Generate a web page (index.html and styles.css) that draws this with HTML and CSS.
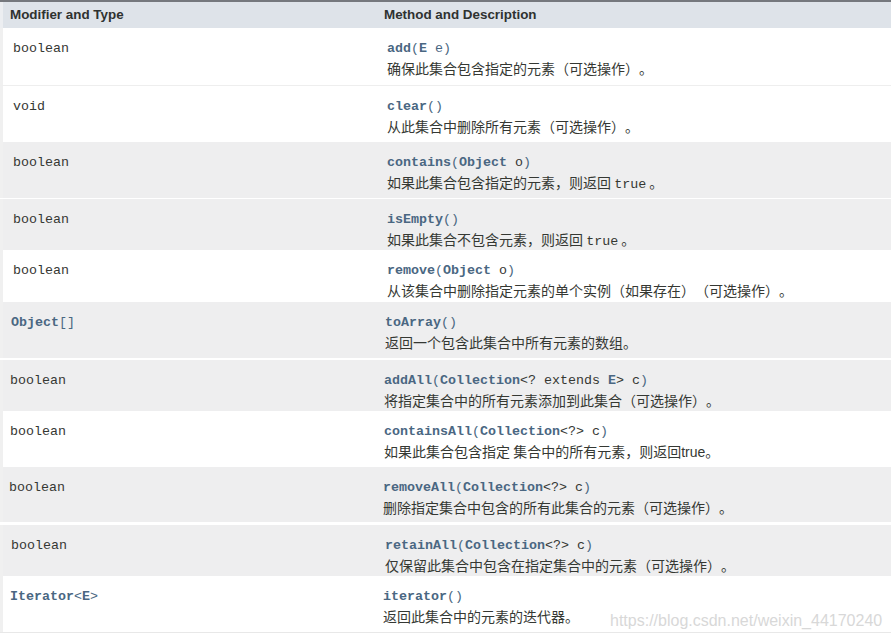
FILE: index.html
```html
<!DOCTYPE html>
<html>
<head>
<meta charset="utf-8">
<link rel="stylesheet" href="styles.css">
</head>
<body>
<div class="table">
  <div class="row head">
    <div class="cell">Modifier and Type</div>
    <div class="cell">Method and Description</div>
  </div>

  <div class="row white h58 bordered">
    <div class="cell"><code class="type">boolean</code></div>
    <div class="cell"><div class="sig"><b>add</b>(<b>E</b> e)</div><div class="desc">确保此集合包含指定的元素（可选操作）。</div></div>
  </div>

  <div class="row white h56">
    <div class="cell"><code class="type">void</code></div>
    <div class="cell"><div class="sig"><b>clear</b>()</div><div class="desc">从此集合中删除所有元素（可选操作）。</div></div>
  </div>

  <div class="row grey h56">
    <div class="cell"><code class="type">boolean</code></div>
    <div class="cell"><div class="sig"><b>contains</b>(<b>Object</b> <span class="dk">o</span>)</div><div class="desc">如果此集合包含指定的元素，则返回 <code class="inl">true</code> 。</div></div>
  </div>

  <div class="row grey h51 gap1">
    <div class="cell"><code class="type">boolean</code></div>
    <div class="cell"><div class="sig"><b>isEmpty</b>()</div><div class="desc">如果此集合不包含元素，则返回 <code class="inl">true</code> 。</div></div>
  </div>

  <div class="row white h52">
    <div class="cell"><code class="type">boolean</code></div>
    <div class="cell"><div class="sig"><b>remove</b>(<b>Object</b> <span class="dk">o</span>)</div><div class="desc">从该集合中删除指定元素的单个实例（如果存在）（可选操作）。</div></div>
  </div>

  <div class="row grey h56 off2">
    <div class="cell"><code class="type link"><b>Object</b>[]</code></div>
    <div class="cell"><div class="sig"><b>toArray</b>()</div><div class="desc">返回一个包含此集合中所有元素的数组。</div></div>
  </div>

  <div class="row grey h51 gap2 off3">
    <div class="cell"><code class="type">boolean</code></div>
    <div class="cell"><div class="sig"><b>addAll</b>(<b>Collection</b><span class="dk">&lt;? extends </span><b>E</b><span class="dk">&gt; c</span>)</div><div class="desc">将指定集合中的所有元素添加到此集合（可选操作）。</div></div>
  </div>

  <div class="row white h56 off3">
    <div class="cell"><code class="type">boolean</code></div>
    <div class="cell"><div class="sig"><b>containsAll</b>(<b>Collection</b><span class="dk">&lt;?&gt; c</span>)</div><div class="desc">如果此集合包含指定 集合中的所有元素，则返回<span class="lat">true</span>。</div></div>
  </div>

  <div class="row grey h55 off4">
    <div class="cell"><code class="type">boolean</code></div>
    <div class="cell"><div class="sig"><b>removeAll</b>(<b>Collection</b><span class="dk">&lt;?&gt; c</span>)</div><div class="desc">删除指定集合中包含的所有此集合的元素（可选操作）。</div></div>
  </div>

  <div class="row grey h51 gap3 off2">
    <div class="cell"><code class="type">boolean</code></div>
    <div class="cell"><div class="sig"><b>retainAll</b>(<b>Collection</b><span class="dk">&lt;?&gt; c</span>)</div><div class="desc">仅保留此集合中包含在指定集合中的元素（可选操作）。</div></div>
  </div>

  <div class="row white h56 off5">
    <div class="cell"><code class="type link"><b>Iterator</b>&lt;<b>E</b>&gt;</code></div>
    <div class="cell"><div class="sig"><b>iterator</b>()</div><div class="desc">返回此集合中的元素的迭代器。</div></div>
  </div>

  <div class="tail"></div>

  <div class="watermark">https://blog.csdn.net/weixin_44170240</div>
</div>
</body>
</html>
```

FILE: styles.css
```css
html, body {
  margin: 0;
  padding: 0;
  background: #ffffff;
}

body {
  width: 891px;
  height: 637px;
  overflow: hidden;
  font-family: "Liberation Sans", Arial, "Noto Sans CJK SC", sans-serif;
  color: #353833;
}

.table {
  position: relative;
  width: 891px;
  border-top: 2px solid #75787d;
  box-sizing: border-box;
}

.row {
  display: grid;
  grid-template-columns: 371px 1fr;
  padding-left: 13px;
  box-sizing: border-box;
  border-left: 3px solid #f0f0f0;
}

.row .cell:first-child {
  margin-left: -3px;
}

.head {
  height: 26px;
  background: #dee3e9;
  padding-left: 10px;
  align-items: center;
  font-size: 13.4px;
  font-weight: bold;
  color: #2f3230;
  line-height: 26px;
  border-left-color: #eceef1;
}

.white { background: #ffffff; }
.grey { background: #eeeeef; }

.h51 { height: 51px; }
.h52 { height: 52px; }
.h55 { height: 55px; }
.h56 { height: 56px; }
.h58 { height: 58px; }

.bordered { border-bottom: 1px solid #eeeeee; }

.gap1 { margin-top: 1px; }
.gap2 { margin-top: 2px; }
.gap3 { margin-top: 3px; }

.off2 { padding-left: 11px; }
.off3 { padding-left: 10px; }
.off4 { padding-left: 9px; }
.off5 { padding-left: 10px; }
.off5 .cell:last-child { margin-left: -1px; }

.cell {
  padding-top: 12px;
  min-width: 0;
}

.head .cell {
  padding-top: 0;
}

.type {
  font-family: "Liberation Mono", "Courier New", monospace;
  font-size: 13.33px;
  line-height: 18px;
  color: #353833;
  display: block;
}

.type.link {
  color: #4a6782;
}

.type b {
  font-weight: bold;
}

.sig {
  font-family: "Liberation Mono", "Courier New", monospace;
  font-size: 13.33px;
  line-height: 18px;
  color: #4a6782;
  white-space: nowrap;
}

.sig b {
  font-weight: bold;
}

.sig .dk {
  color: #353833;
}

.desc {
  font-family: "Noto Sans CJK SC", "Liberation Sans", sans-serif;
  font-size: 14px;
  line-height: 20px;
  color: #353833;
  white-space: nowrap;
  text-spacing-trim: space-all;
}

.inl {
  font-family: "Liberation Mono", "Courier New", monospace;
  font-size: 13.33px;
}

.lat {
  font-family: "Liberation Sans", Arial, sans-serif;
  font-size: 14px;
}

.tail {
  height: 5px;
  border-top: 1px solid #e8e8e8;
  background: #ffffff;
}

.watermark {
  position: absolute;
  left: 610px;
  top: 609px;
  font-family: "Liberation Sans", Arial, sans-serif;
  font-size: 16px;
  line-height: 20px;
  color: #d8d8d8;
  white-space: nowrap;
}
```
